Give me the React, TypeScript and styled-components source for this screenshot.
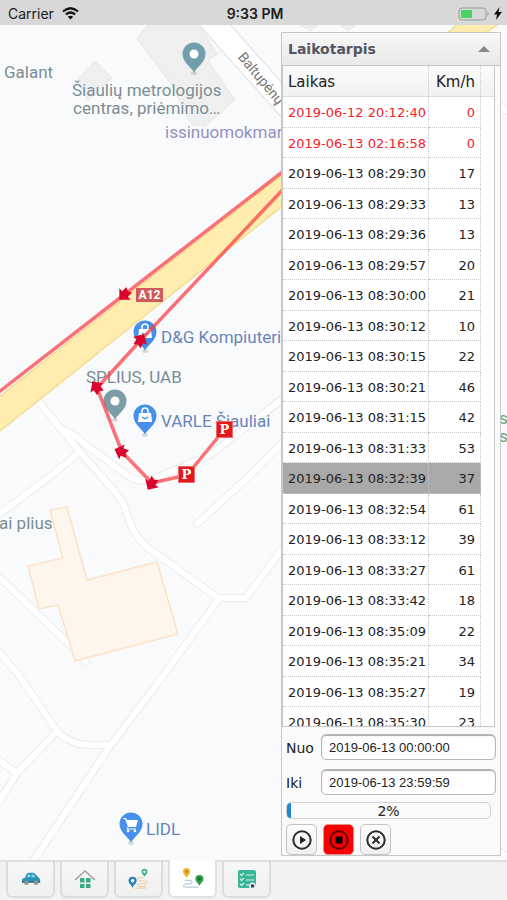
import React from "react";
import styled, { createGlobalStyle, css } from "styled-components";

const GlobalStyle = createGlobalStyle`
  * { box-sizing: border-box; }
  body { margin: 0; font-family: "DejaVu Sans", sans-serif; color: #222; }
`;

const Screen = styled.div`
  display: flex;
  flex-direction: column;
  height: 100vh;
  overflow: hidden;
  background: #f2f2f2;
`;

/* ---------- status bar ---------- */

const StatusBar = styled.header`
  display: grid;
  grid-template-columns: 1fr auto 1fr;
  align-items: center;
  height: 25px;
  padding: 2px 5px 0 8px;
  background: #d8d8d8;
  font: 14px/20px Inter, sans-serif;
  color: #1c1c1c;
`;
const StatusSide = styled.div<{ $end?: boolean }>`
  display: flex;
  align-items: center;
  gap: ${(p) => (p.$end ? 4 : 8)}px;
  justify-content: ${(p) => (p.$end ? "flex-end" : "flex-start")};
`;
const Clock = styled.time`
  font-weight: 600;
`;

/* ---------- map ---------- */

const Map = styled.main`
  position: relative;
  flex: 1;
  min-height: 0;
  overflow: hidden;
  background: #f9fafc;
`;
const MapLayer = styled.svg`
  position: absolute;
  inset: 0;
  width: 100%;
  height: 100%;
`;
const MapLabel = styled.span<{ $x: number; $y: number; $color?: string; $turn?: number; $size?: number }>`
  position: absolute;
  left: ${(p) => p.$x}px;
  top: ${(p) => p.$y}px;
  font: ${(p) => p.$size ?? 17}px/18px Roboto, sans-serif;
  color: ${(p) => p.$color ?? "#7a8c93"};
  text-align: center;
  white-space: pre;
  text-shadow: 0 0 2px #fff;
  transform-origin: 0 50%;
  ${(p) => p.$turn && css`transform: rotate(${p.$turn}deg);`}
`;
const RoadShield = styled.span`
  position: absolute;
  left: 136px;
  top: 263px;
  width: 27px;
  height: 14px;
  background: #cf5c5c;
  color: #fff;
  text-align: center;
  font: bold 12px/14px Roboto, sans-serif;
`;
const Parking = styled.span<{ $x: number; $y: number }>`
  position: absolute;
  left: ${(p) => p.$x}px;
  top: ${(p) => p.$y}px;
  width: 17px;
  height: 17px;
  background: #e3191d;
  border: 1px solid #ef6b6b;
  color: #fff;
  text-align: center;
  font: bold 13px/15px "DejaVu Serif", serif;
`;

/* ---------- panel ---------- */

const Panel = styled.section`
  position: absolute;
  top: 7px;
  right: 6px;
  bottom: 4px;
  width: 220px;
  display: flex;
  flex-direction: column;
  background: #fafafa;
  border: 1px solid #c8c8c8;
`;
const PanelHeader = styled.button`
  display: flex;
  justify-content: space-between;
  align-items: center;
  height: 33px;
  flex: none;
  padding: 0 10px 0 6px;
  border: 0;
  border-bottom: 1px solid #c4c4c4;
  background: linear-gradient(#f8f8f8, #e9e9e9);
  font: bold 14px/18px "DejaVu Sans", sans-serif;
  color: #555560;
`;
const TableView = styled.div`
  flex: 1;
  min-height: 0;
  overflow: hidden;
  margin-right: 5px;
  border: 1px solid #c8c8c8;
  border-width: 0 1px 1px;
  background: #fff;
`;
const Table = styled.table`
  width: 100%;
  table-layout: fixed;
  border-collapse: separate;
  border-spacing: 0;
`;
const HeadCell = styled.th<{ $num?: boolean }>`
  height: 31px;
  padding: 2px 5px 0;
  text-align: ${(p) => (p.$num ? "right" : "left")};
  font: 15px/18px "DejaVu Sans", sans-serif;
  color: #222;
  background: linear-gradient(#fcfcfc, #f1f1f1);
  border-right: 1px dotted #c8c8c8;
  border-bottom: 1px solid #ddd;
  &:last-child { border-right: 0; }
`;
const Cell = styled.td<{ $num?: boolean }>`
  padding: 2px 5px 0;
  text-align: ${(p) => (p.$num ? "right" : "left")};
  font: 13px/18px "DejaVu Sans", sans-serif;
  white-space: nowrap;
  border-right: 1px dotted #c8c8c8;
  border-bottom: 1px dotted #c8c8c8;
`;
const Row = styled.tr<{ $alert?: boolean; $selected?: boolean }>`
  height: 30px;
  color: ${(p) => (p.$alert ? "#f5222d" : "#222")};
  &:nth-child(odd) { height: 31px; }
  ${(p) => p.$selected && css`${Cell} { background: #a9a9a9; }`}
`;
const Form = styled.form`
  flex: none;
  display: flex;
  flex-direction: column;
  padding: 7px 4px 0;
`;
const Field = styled.div`
  display: grid;
  grid-template-columns: 35px 1fr;
  align-items: center;
  margin-bottom: 9px;
`;
const Label = styled.label`
  padding-top: 2px;
  font-size: 14px;
  line-height: 18px;
`;
const Input = styled.input`
  width: 100%;
  height: 26px;
  padding: 0 7px;
  border: 1px solid #b8b8b8;
  border-radius: 5px;
  background: #fff;
  box-shadow: inset 0 1px 1px #aaa;
  font: 13px/18px "Liberation Sans", sans-serif;
  color: #222;
`;
const Progress = styled.div`
  display: grid;
  height: 17px;
  margin: -2px 5px 5px 0;
  border: 1px solid #d2d2d2;
  border-radius: 5px;
  overflow: hidden;
  background: #fafafa;
  font-size: 14px;
  line-height: 16px;
  text-align: center;
  > * { grid-area: 1 / 1; }
`;
const ProgressFill = styled.div`
  background: #1e88d2;
`;
const Actions = styled.div`
  display: flex;
  gap: 6px;
`;
const Action = styled.button<{ $active?: boolean }>`
  display: grid;
  place-items: center;
  width: 31px;
  height: 31px;
  padding: 0;
  border: 1px solid ${(p) => (p.$active ? "#e09090" : "#c4c4c4")};
  border-radius: 5px;
  background: ${(p) => (p.$active ? "#fb0000" : "linear-gradient(#fdfdfd, #f0f0f0)")};
`;

/* ---------- tabs ---------- */

const TabBar = styled.nav`
  flex: none;
  display: flex;
  gap: 5px;
  height: 40px;
  padding-left: 6px;
  border-top: 2px solid #dedede;
  background: #f2f2f2;
`;
const Tab = styled.button<{ $active?: boolean }>`
  display: grid;
  place-items: center;
  width: 49px;
  height: 36px;
  padding: 0;
  border: 2px solid #dcdcdc;
  border-top: 0;
  border-radius: 0 0 6px 6px;
  background: ${(p) => (p.$active ? "#fff" : "linear-gradient(#f8f8f8, #efefef)")};
  ${(p) => p.$active && css`margin-top: -2px; height: 38px; border-color: #e0e0e0;`}
`;

const times: [string, number][] = [
  ["2019-06-12 20:12:40", 0], ["2019-06-13 02:16:58", 0], ["2019-06-13 08:29:30", 17],
  ["2019-06-13 08:29:33", 13], ["2019-06-13 08:29:36", 13], ["2019-06-13 08:29:57", 20],
  ["2019-06-13 08:30:00", 21], ["2019-06-13 08:30:12", 10], ["2019-06-13 08:30:15", 22],
  ["2019-06-13 08:30:21", 46], ["2019-06-13 08:31:15", 42], ["2019-06-13 08:31:33", 53],
  ["2019-06-13 08:32:39", 37], ["2019-06-13 08:32:54", 61], ["2019-06-13 08:33:12", 39],
  ["2019-06-13 08:33:27", 61], ["2019-06-13 08:33:42", 18], ["2019-06-13 08:35:09", 22],
  ["2019-06-13 08:35:21", 34], ["2019-06-13 08:35:27", 19], ["2019-06-13 08:35:30", 23],
];

const streets = [
  "M-10 521 L48 478 L80 452",
  "M39 402 L80 452 L112 488 Q121 498 125 508 Q132 534 147 547 L218 598 L246 598 L285 545",
  "M62 430 Q72 432 82 442 L128 476 Q140 484 156 478 L210 455 L290 393",
  "M197 524 L245 480 L290 435",
  "M-5 573 L68 643 L86 662",
  "M-5 648 L18 674 L57 731 Q70 745 91 745 L110 745",
  "M218 600 L160 680 L108 749 L30 866",
  "M57 731 L17 773 L-5 808",
  "M-5 758 L17 773",
  "M500 106 L515 116",
  "M490 845 L515 862",
];

function MapPin({ x, y, color, kind }: { x: number; y: number; color: string; kind?: "bag" | "cart" }) {
  return (
    <g transform={`translate(${x} ${y})`}>
      <ellipse cy="19" rx="3" ry="2" fill="#9aa5ad" opacity=".35" />
      <path d="M0 19C-1 14 -11.500 9 -11.500 0A11.500 11.500 0 0 1 11.500 0C11.500 9 1 14 0 19Z" fill={color} />
      {!kind && <circle r="4.500" fill="#fff" />}
      {kind === "bag" && (
        <g fill="none" stroke="#fff" strokeWidth="1.500">
          <path d="M-6 -3H6L7 6H-7Z" fill="#fff" stroke="none" />
          <path d="M-3 -3V-5A3 3 0 0 1 3 -5V-3" />
          <path d="M-3 1Q0 4 3 1" stroke={color} />
        </g>
      )}
      {kind === "cart" && (
        <g fill="#fff">
          <path d="M-8 -6H-5L-4 -4H7L5 3H-3L-6 -5H-8Z" />
          <path d="M-3 3L-4 5H5" fill="none" stroke="#fff" />
          <circle cx="-3" cy="7" r="1.300" /><circle cx="4" cy="7" r="1.300" />
        </g>
      )}
    </g>
  );
}

function Arrow({ x, y, turn }: { x: number; y: number; turn: number }) {
  return (
    <path
      transform={`translate(${x} ${y}) rotate(${turn})`}
      d="M0 -8L8 0H4V6L0 4L-4 6V0H-8Z"
      fill="#d9042b"
    />
  );
}

function ActionIcon({ kind }: { kind: "play" | "stop" | "close" }) {
  return (
    <svg width="22" height="22" viewBox="0 0 22 22" fill="none" stroke={kind === "stop" ? "#500" : "#2a2a2a"} strokeWidth="2">
      <circle cx="11" cy="11" r="8.700" />
      {kind === "play" && <path d="M9 7L15 11L9 15Z" fill="#222" stroke="none" />}
      {kind === "stop" && <path d="M7.500 7.500H14.500V14.500H7.500Z" fill="#000" stroke="none" />}
      {kind === "close" && <path d="M7.500 7.500L14.500 14.500M14.500 7.500L7.500 14.500" />}
    </svg>
  );
}

function SmallPin({ x, y, s, color, dot = "#fff" }: { x: number; y: number; s: number; color: string; dot?: string }) {
  return (
    <g transform={`translate(${x} ${y}) scale(${s})`}>
      <path d="M0 7C-1 4 -4 3 -4 0A4 4 0 0 1 4 0C4 3 1 4 0 7Z" fill={color} />
      <circle r="1.700" fill={dot} />
    </g>
  );
}

const CarIcon = () => (
  <svg width="20" height="22" viewBox="0 0 22 24">
    <path d="M1 16V13Q1 11 4 11L6 7Q7 5 9 5H13Q15 5 17 8L19 10Q21 11 21 13V16Z" fill="#2a93b5" />
    <path d="M6 10L8 7H10V10ZM11.500 7H14L16 10H11.500Z" fill="#8fd3e6" />
    <path d="M1 14H21V16H1Z" fill="#1d7f9e" />
    <circle cx="6" cy="16" r="2.500" fill="#909090" /><circle cx="16.500" cy="16" r="2.500" fill="#909090" />
  </svg>
);
const HouseIcon = () => (
  <svg width="22" height="24" viewBox="0 0 22 24">
    <path d="M1 13L11 4L21 13" fill="none" stroke="#a0a0a0" strokeWidth="1.500" />
    <path d="M6 11H10.500V15.500H6ZM12 11H16.500V15.500H12ZM6 17H10.500V21H6ZM12 17H16.500V21H12Z" fill="#38ad83" />
  </svg>
);
const RouteIcon = () => (
  <svg width="22" height="22" viewBox="0 0 24 24">
    <path d="M12 10.500H18M18 10.500H11Q9 12.500 12 14H19Q23 15.500 19 17H12Q9 18.500 12 20H20M7 22H20" fill="none" stroke="#f2d2b2" strokeWidth="1.300" />
    <SmallPin x={5} y={14} s={1.1} color="#2d7fc0" />
    <SmallPin x={18} y={4} s={0.8} color="#35b091" />
  </svg>
);
const HistoryIcon = () => (
  <svg width="22" height="22" viewBox="0 0 24 24">
    <path d="M3 14.500H9Q13 16.500 9 18.500H4Q-1 21 4 22H18" fill="none" stroke="#b3cbe0" strokeWidth="1.300" />
    <SmallPin x={5} y={5} s={1} color="#e8bc2c" dot="#c18b10" />
    <SmallPin x={19} y={13} s={1.1} color="#2f9f4c" dot="#176b2b" />
  </svg>
);
const ListIcon = () => (
  <svg width="22" height="24" viewBox="0 0 22 24">
    <rect x="2" y="3" width="18" height="18" rx="2" fill="#3bb598" />
    <path d="M4 7L5.500 8.500L8 6M4 12L5.500 13.500L8 11M4 17L5.500 18.500L8 16M10 8H18M10 13H18M10 18H13" fill="none" stroke="#d8f3e9" strokeWidth="1.200" />
    <circle cx="16.500" cy="19" r="3.500" fill="#e3eff7" /><circle cx="16.500" cy="19" r="1.800" fill="#35405a" />
  </svg>
);

const tabs = [
  { name: "Automobiliai", Icon: CarIcon },
  { name: "Objektai", Icon: HouseIcon },
  { name: "Maršrutai", Icon: RouteIcon },
  { name: "Istorija", Icon: HistoryIcon },
  { name: "Užduotys", Icon: ListIcon },
];

const BLUE = "#6584bb";

export default function App() {
  const progress = 2;
  return (
    <Screen>
      <GlobalStyle />
      <StatusBar>
        <StatusSide>
          Carrier
          <svg width="17" height="13" viewBox="0 0 17 13" fill="none" stroke="#111" strokeWidth="2.200">
            <path d="M1 4.500Q8.500 -2 16 4.500M3.800 7.500Q8.500 3.500 13.200 7.500" />
            <path d="M8.500 12.500L5.800 9.800Q8.500 7.800 11.200 9.800Z" fill="#111" stroke="none" />
          </svg>
        </StatusSide>
        <Clock>9:33 PM</Clock>
        <StatusSide $end>
          <svg width="32" height="14" viewBox="0 0 32 14">
            <rect x="1" y="1" width="27" height="12" rx="3" fill="none" stroke="#999" />
            <rect x="3" y="3" width="11" height="8" fill="#45d55f" />
            <path d="M29.500 5Q32 7 29.500 9Z" fill="#999" />
          </svg>
          <svg width="8" height="13" viewBox="0 0 8 13"><path d="M5.500 0L0 7.500H3L2 13L8 5H4.500Z" fill="#111" /></svg>
        </StatusSide>
      </StatusBar>

      <Map>
        <MapLayer aria-hidden="true">
          <g transform="translate(0 -25)">
            <g fill="#efeff0" stroke="#e6e7e8">
              <path d="M159 10L137 39L171 84L192 125L205 126L235 100L208 61L217 54L190 10Z" />
              <path d="M95 61L77 80L88 100L112 78Z" />
              <path d="M300 25L310 31L318 25ZM340 25L348 31L356 25Z" />
            </g>
            <path d="M205 14L295 115" stroke="#e6e7e8" strokeWidth="25" />
            <path d="M205 14L295 115" stroke="#fff" strokeWidth="22" />
            <g fill="none" strokeLinejoin="round" strokeLinecap="round">
              {streets.map((d) => <path key={d} d={d} stroke="#eaecec" strokeWidth="8" />)}
              {streets.map((d) => <path key={d} d={d} stroke="#fff" strokeWidth="6" />)}
            </g>
            <path d="M50 510L67 507L87 580L157 562L178 634L75 661L58 605L39 609L28 566L63 558Z" fill="#fef6ed" stroke="#fbe2c9" strokeWidth="1.500" />
            <path d="M-5 400L290 168L510 16L465 18L290 168V200L-5 435Z" fill="#ffedaf" stroke="#f4dc95" strokeWidth="1.500" />
            <MapPin x={194} y={54} color="#719eab" />
            <MapPin x={115} y={401} color="#7c9ca6" />
            <MapPin x={145} y={332} color="#4690eb" kind="bag" />
            <MapPin x={145} y={416} color="#4690eb" kind="bag" />
            <MapPin x={131} y={824} color="#4690eb" kind="cart" />
          </g>
        </MapLayer>
        <MapLabel $x={4} $y={38}>Galant</MapLabel>
        <MapLabel $x={72} $y={56}>{"Šiaulių metrologijos\ncentras, priėmimo…"}</MapLabel>
        <MapLabel $x={165} $y={98} $color="#9090c4">issinuomokmar</MapLabel>
        <MapLabel $x={241} $y={20} $turn={50} $size={14} $color="#777">Baltupėnų</MapLabel>
        <MapLabel $x={161} $y={303} $color={BLUE}>D&amp;G Kompiuteri</MapLabel>
        <MapLabel $x={86} $y={343}>SPLIUS, UAB</MapLabel>
        <MapLabel $x={161} $y={387} $color={BLUE}>VARLE Šiauliai</MapLabel>
        <MapLabel $x={-1} $y={489}>ai plius</MapLabel>
        <MapLabel $x={146} $y={795} $color={BLUE}>LIDL</MapLabel>
        <MapLabel $x={499} $y={384} $color="#5cab68">{"s\ns"}</MapLabel>
        <RoadShield>A12</RoadShield>
        <MapLayer aria-hidden="true">
          <g transform="translate(0 -25)">
            <path d="M-5 395L125 294L290 166M290 182L140 341L97 388L122 452L152 483L187 475L224 430" fill="none" stroke="#fa3d45" strokeOpacity=".72" strokeWidth="3.500" />
            <Arrow x={125} y={294} turn={225} />
            <Arrow x={140} y={341} turn={30} />
            <Arrow x={97} y={388} turn={-35} />
            <Arrow x={122} y={452} turn={-70} />
            <Arrow x={152} y={483} turn={212} />
          </g>
        </MapLayer>
        <Parking $x={178} $y={441}>P</Parking>
        <Parking $x={216} $y={396}>P</Parking>

        <Panel>
          <PanelHeader type="button" aria-expanded="true">
            Laikotarpis
            <svg width="12" height="6" viewBox="0 0 12 6"><path d="M0 6L6 0L12 6Z" fill="#888" /></svg>
          </PanelHeader>
          <TableView>
            <Table>
              <colgroup>
                <col />
                <col width="52" />
                <col width="13" />
              </colgroup>
              <thead>
                <tr><HeadCell>Laikas</HeadCell><HeadCell $num>Km/h</HeadCell><HeadCell as="td" /></tr>
              </thead>
              <tbody>
                {times.map(([time, speed]) => (
                  <Row key={time} $alert={speed === 0} $selected={time.endsWith("08:32:39")}>
                    <Cell>{time}</Cell>
                    <Cell $num>{speed}</Cell>
                  </Row>
                ))}
              </tbody>
            </Table>
          </TableView>
          <Form onSubmit={(e) => e.preventDefault()}>
            <Field><Label htmlFor="from">Nuo</Label><Input id="from" defaultValue="2019-06-13 00:00:00" /></Field>
            <Field><Label htmlFor="to">Iki</Label><Input id="to" defaultValue="2019-06-13 23:59:59" /></Field>
            <Progress role="progressbar" aria-label="Eiga" aria-valuenow={progress}>
              <ProgressFill style={{ width: `${progress}%` }} />
              <span>{progress}%</span>
            </Progress>
            <Actions>
              <Action type="button" aria-label="Leisti"><ActionIcon kind="play" /></Action>
              <Action type="button" aria-label="Stabdyti" $active><ActionIcon kind="stop" /></Action>
              <Action type="button" aria-label="Uždaryti"><ActionIcon kind="close" /></Action>
            </Actions>
          </Form>
        </Panel>
      </Map>

      <TabBar>
        {tabs.map(({ name, Icon }) => (
          <Tab key={name} type="button" aria-label={name} $active={name === "Istorija"}><Icon /></Tab>
        ))}
      </TabBar>
    </Screen>
  );
}
